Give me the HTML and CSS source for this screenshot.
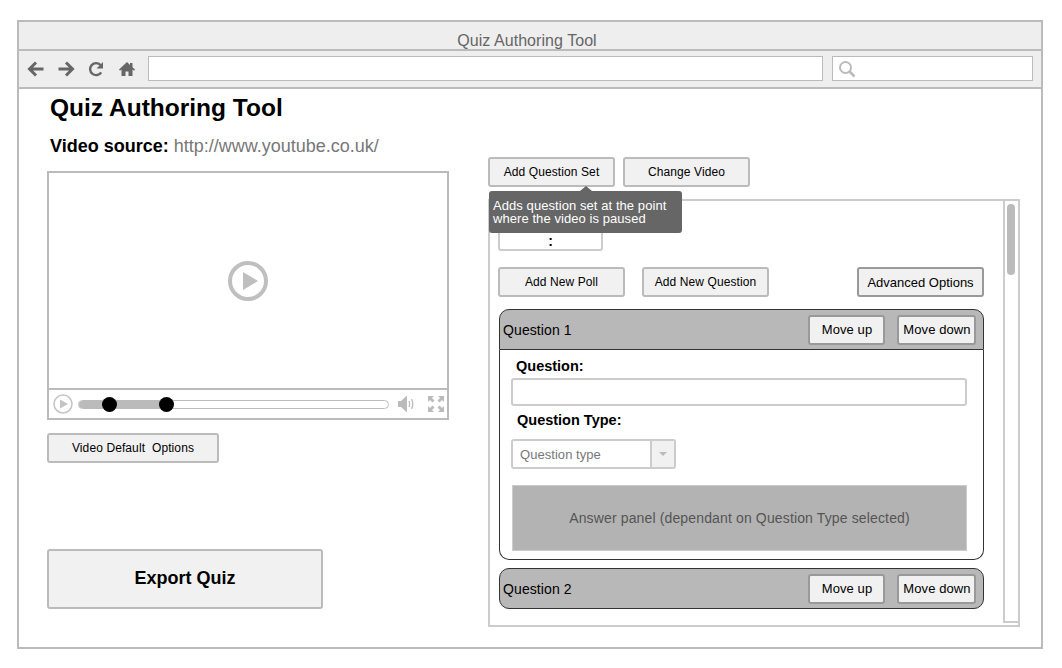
FILE: index.html
```html
<!DOCTYPE html>
<html lang="en">
<head>
  <meta charset="UTF-8">
  <meta name="viewport" content="width=device-width, initial-scale=1.0">
  <title>Quiz Authoring Tool</title>
  <link rel="stylesheet" href="styles.css">
</head>
<body>
  <div class="browser">
    <div class="title-bar">Quiz Authoring Tool</div>
    <div class="tool-bar">
      <svg class="nav-icon" width="18" height="18" viewBox="0 0 18 18"><path d="M9 2.500 2.500 9 9 15.500M3 9h13.500" fill="none" stroke="#666" stroke-width="3"/></svg>
      <svg class="nav-icon" width="18" height="18" viewBox="0 0 18 18"><path d="M9 2.500 15.500 9 9 15.500M15 9H1.500" fill="none" stroke="#666" stroke-width="3"/></svg>
      <svg class="nav-icon" width="18" height="18" viewBox="0 0 18 18"><path d="M14.200 12.300A6 6 0 1 1 13.500 5" fill="none" stroke="#666" stroke-width="2.400"/><path d="M16 2v6.500h-6.500z" fill="#666"/></svg>
      <svg class="nav-icon" width="18" height="18" viewBox="0 0 18 18"><path d="M9 2 1 9.500l1 1.200 1.500-1.200V16h4v-4.500h3V16h4V9.500l1.500 1.200 1-1.200-2.500-2.300V3h-2.500v2z" fill="#666"/></svg>
      <div class="url-box"></div>
      <div class="search-box">
        <svg width="18" height="18" viewBox="0 0 18 18"><circle cx="7.500" cy="7.500" r="5.500" fill="none" stroke="#bbb" stroke-width="2"/><path d="m11.500 11.500 5 5" stroke="#bbb" stroke-width="2.600"/></svg>
      </div>
    </div>

    <div class="content">
      <div class="left-col">
        <h1>Quiz Authoring Tool</h1>
        <p class="source"><b>Video source:</b> <span>http://www.youtube.co.uk/</span></p>

        <div class="video">
          <div class="screen">
            <svg width="40" height="40" viewBox="0 0 40 40"><circle cx="20" cy="20" r="18" fill="none" stroke="#bfbfbf" stroke-width="4"/><path d="M15 11 30 20 15 29z" fill="#bfbfbf"/></svg>
          </div>
          <div class="controls">
            <svg width="20" height="20" viewBox="0 0 20 20"><circle cx="10" cy="10" r="9" fill="none" stroke="#c4c4c4" stroke-width="1.500"/><path d="M7 5.500 15 10l-8 4.500z" fill="#c4c4c4"/></svg>
            <div class="track">
              <div class="track-fill"></div>
              <span class="knob knob-a"></span>
              <span class="knob knob-b"></span>
            </div>
            <svg class="volume" width="18" height="18" viewBox="0 0 18 18"><path d="M0 6h3l6-5.500v17L3 12H0z" fill="#bbb"/><path d="M11 6q1.500 3 0 6M13.500 4q2.500 5 0 10" fill="none" stroke="#bbb" stroke-width="1.300"/></svg>
            <svg width="18" height="18" viewBox="0 0 18 18"><path d="M1 1h6L5 3l2.500 2.500-2 2L3 5 1 7zM17 1v6l-2-2-2.500 2.500-2-2L13 3l-2-2zM1 17v-6l2 2 2.500-2.500 2 2L5 15l2 2zM17 17h-6l2-2-2.500-2.500 2-2L15 13l2-2z" fill="#bbb"/></svg>
          </div>
        </div>

        <button class="btn btn-defaults" type="button">Video Default &nbsp;Options</button>
        <button class="btn btn-export" type="button">Export Quiz</button>
      </div>

      <div class="right-col">
        <div class="top-buttons">
          <button class="btn btn-set" type="button">Add Question Set</button>
          <button class="btn btn-set" type="button">Change Video</button>
        </div>
        <div class="tooltip">Adds question set at the point<br>where the video is paused</div>

        <div class="panel">
          <div class="panel-main">
            <div class="time-box">:</div>
            <div class="add-row">
              <button class="btn btn-add" type="button">Add New Poll</button>
              <button class="btn btn-add" type="button">Add New Question</button>
              <button class="btn btn-advanced" type="button">Advanced Options</button>
            </div>

            <div class="question open">
              <div class="question-head">
                <span class="question-name">Question 1</span>
                <button class="btn btn-move btn-up" type="button">Move up</button>
                <button class="btn btn-move btn-down" type="button">Move down</button>
              </div>
              <div class="question-body">
                <label class="field-label">Question:</label>
                <div class="text-input"></div>
                <label class="field-label type-label">Question Type:</label>
                <div class="select">
                  <span class="select-text">Question type</span>
                  <span class="select-arrow"></span>
                </div>
                <div class="answer-panel">Answer panel (dependant on Question Type selected)</div>
              </div>
            </div>

            <div class="question">
              <div class="question-head">
                <span class="question-name">Question 2</span>
                <button class="btn btn-move btn-up" type="button">Move up</button>
                <button class="btn btn-move btn-down" type="button">Move down</button>
              </div>
            </div>
          </div>
          <div class="scrollbar"><div class="thumb"></div></div>
        </div>
      </div>
    </div>
  </div>
</body>
</html>
```

FILE: styles.css
```css
* {
  box-sizing: border-box;
}

body {
  font-family: "Liberation Sans", Arial, sans-serif;
  margin: 0;
  background-color: #fff;
  color: #000;
}

.browser {
  width: 1026px;
  height: 629px;
  margin: 20px 0 0 17px;
  border: 2px solid #bbb;
}

.title-bar {
  height: 29px;
  padding: 10px 6px 0 0;
  background-color: #eee;
  border-bottom: 2px solid #bbb;
  color: #666;
  font-size: 16px;
  letter-spacing: 0.05px;
  line-height: 18px;
  text-align: center;
}

.tool-bar {
  display: flex;
  align-items: center;
  height: 38px;
  padding: 0 8px 1px 8px;
  background-color: #eee;
  border-bottom: 2px solid #bbb;
}

.nav-icon {
  margin-right: 12px;
}

.nav-icon:nth-child(3) {
  margin-right: 13px;
}

.url-box,
.search-box {
  height: 25px;
  background-color: #fff;
  border: 1px solid #bbb;
}

.url-box {
  width: 675px;
}

.search-box {
  display: flex;
  align-items: center;
  width: 201px;
  margin-left: 9px;
  padding-left: 5px;
}

.content {
  display: flex;
  height: 559px;
  padding-left: 28px;
}

.left-col {
  width: 441px;
}

h1 {
  margin: 4px 0 0 3px;
  font-size: 24.5px;
  line-height: 30px;
}

.source {
  margin: 12px 0 0 3px;
  font-size: 18px;
  line-height: 22px;
}

.source span {
  color: #777;
}

.video {
  display: flex;
  flex-direction: column;
  width: 402px;
  height: 249px;
  margin-top: 14px;
  border: 2px solid #bbb;
}

.screen {
  display: flex;
  flex: 1;
  align-items: center;
  justify-content: center;
}

.controls {
  display: flex;
  align-items: center;
  height: 30px;
  padding: 0 2px 0 4px;
  border-top: 2px solid #bbb;
}

.track {
  position: relative;
  width: 311px;
  height: 9px;
  margin: 0 9px 0 5px;
  border: 1px solid #bbb;
  border-radius: 5px;
}

.track-fill {
  width: 88px;
  height: 100%;
  background-color: #bbb;
  border-radius: 4px 0 0 4px;
}

.knob {
  position: absolute;
  top: -4px;
  width: 15px;
  height: 15px;
  background-color: #000;
  border-radius: 50%;
}

.knob-a {
  left: 23px;
}

.knob-b {
  left: 80px;
}

.volume {
  margin-right: 11px;
}

.btn {
  display: block;
  padding: 0;
  background-color: #f1f1f1;
  border: 2px solid #bbb;
  border-radius: 3px;
  color: #000;
  font-family: inherit;
  font-size: 12px;
  letter-spacing: 0.1px;
}

.btn-defaults {
  width: 172px;
  height: 30px;
  margin-top: 13px;
}

.btn-export {
  width: 276px;
  height: 60px;
  margin-top: 86px;
  padding-bottom: 2px;
  font-size: 18px;
  font-weight: bold;
  letter-spacing: 0;
}

.right-col {
  position: relative;
  width: 532px;
}

.top-buttons {
  display: flex;
  gap: 8px;
  margin-top: 68px;
}

.btn-set {
  width: 127px;
  height: 30px;
}

.tooltip {
  position: absolute;
  top: 102px;
  left: 1px;
  width: 193px;
  height: 42px;
  padding: 8px 0 0 4px;
  background-color: #666;
  border-radius: 3px;
  color: #fff;
  font-size: 13px;
  letter-spacing: 0.07px;
  line-height: 13px;
}

.tooltip::before {
  content: "";
  position: absolute;
  top: -5px;
  left: 91px;
  border-left: 6px solid transparent;
  border-right: 6px solid transparent;
  border-bottom: 5px solid #666;
}

.panel {
  display: flex;
  height: 428px;
  margin-top: 12px;
  border: 2px solid #ccc;
}

.panel-main {
  width: 513px;
  padding: 0 19px 0 8px;
}

.time-box {
  width: 105px;
  height: 26px;
  margin-top: 24px;
  padding-top: 6px;
  background-color: #fff;
  border: 2px solid #ccc;
  border-radius: 3px;
  font-size: 14px;
  font-weight: bold;
  line-height: 16px;
  text-align: center;
}

.add-row {
  display: flex;
  margin-top: 16px;
}

.btn-add {
  width: 127px;
  height: 30px;
  margin-right: 17px;
}

.btn-advanced {
  width: 127px;
  height: 30px;
  margin-left: auto;
  border-color: #999;
  font-size: 13px;
  letter-spacing: 0;
}

.question {
  width: 485px;
  margin: 8px 0 0 1px;
}

.open {
  margin-top: 12px;
}

.question-head {
  display: flex;
  align-items: center;
  height: 41px;
  padding: 0 7px 0 3px;
  background-color: #b8b8b8;
  border: 1px solid #333;
  border-radius: 10px;
  font-size: 14px;
  letter-spacing: 0.1px;
}

.open .question-head {
  border-radius: 10px 10px 0 0;
}

.question-name {
  flex: 1;
}

.btn-move {
  height: 30px;
  border-color: #999;
  font-size: 13px;
  letter-spacing: 0.1px;
}

.btn-up {
  width: 77px;
  padding-left: 1px;
}

.btn-down {
  width: 79px;
  margin-left: 12px;
  padding-left: 1px;
}

.question-body {
  height: 210px;
  padding: 8px 16px 0 11px;
  border: 1px solid #333;
  border-top: none;
  border-radius: 0 0 10px 10px;
}

.field-label {
  display: block;
  margin-left: 5px;
  font-size: 14.5px;
  font-weight: bold;
  line-height: 16px;
}

.text-input {
  height: 28px;
  margin-top: 4px;
  background-color: #fff;
  border: 2px solid #ccc;
  border-radius: 3px;
}

.type-label {
  margin: 6px 0 0 6px;
}

.select {
  display: flex;
  width: 165px;
  height: 30px;
  margin-top: 11px;
  border: 2px solid #ccc;
  border-radius: 3px;
}

.select-text {
  flex: 1;
  padding-left: 7px;
  color: #777;
  font-size: 13px;
  letter-spacing: 0.05px;
  line-height: 27px;
}

.select-arrow {
  position: relative;
  width: 24px;
  background-color: #f1f1f1;
  border-left: 2px solid #ccc;
}

.select-arrow::after {
  content: "";
  position: absolute;
  top: 11px;
  left: 7px;
  border-left: 4px solid transparent;
  border-right: 4px solid transparent;
  border-top: 4px solid #bbb;
}

.answer-panel {
  display: flex;
  align-items: center;
  justify-content: center;
  width: 455px;
  height: 66px;
  margin: 16px 0 0 1px;
  background-color: #b3b3b3;
  border: 1px solid #ccc;
  color: #555;
  font-size: 14px;
  letter-spacing: 0.14px;
}

.scrollbar {
  width: 15px;
  height: 422px;
  padding: 3px 0 0 2px;
  border: 2px solid #ccc;
  border-top: none;
  border-right: none;
}

.thumb {
  width: 8px;
  height: 71px;
  background-color: #bbb;
  border-radius: 4px;
}
```
